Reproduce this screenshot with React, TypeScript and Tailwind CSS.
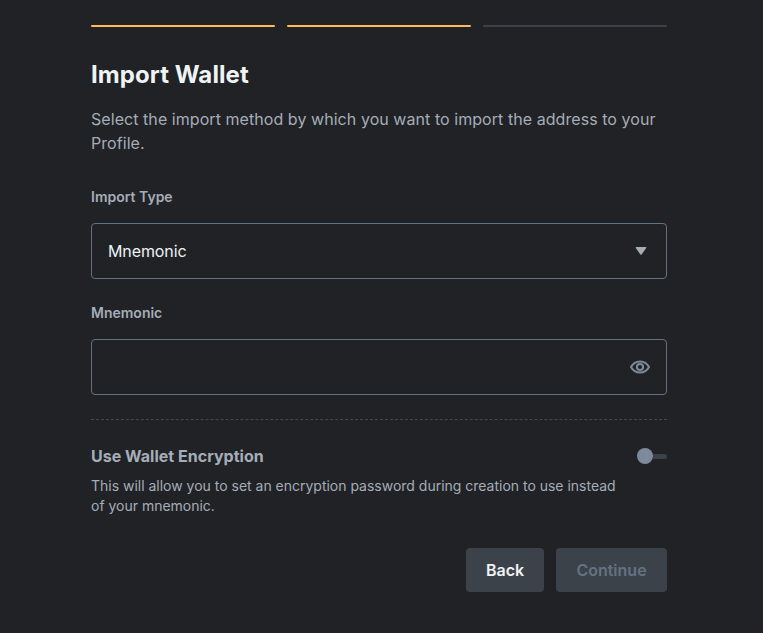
import React from "react";

export default function App() {
  return (
    <div className="min-h-screen w-full bg-[#212225] pt-[25px] pl-[91px] font-['Inter',sans-serif] text-[#a5adb9]">
      <main className="w-[576px]">
        <div className="grid grid-cols-3 gap-3">
          <div className="h-0.5 rounded-[1px] bg-[#ffbb56]" />
          <div className="h-0.5 rounded-[1px] bg-[#ffbb56]" />
          <div className="h-0.5 rounded-[1px] bg-[#3c4249]" />
        </div>
        <h1 className="mt-8 text-2xl leading-[31px] font-bold tracking-[0.08px] text-[#eef3f5]">Import Wallet</h1>
        <p className="mt-[17px] text-base leading-6 tracking-[0.058px]">
          Select the import method by which you want to import the address to your Profile.
        </p>
        <label className="mt-8 block text-sm leading-5 font-semibold">Import Type</label>
        <div className="mt-4 flex h-14 items-center justify-between rounded border border-[#637282] pr-[19px] pl-4 text-base tracking-[-0.1px] text-[#eef3f5]">
          Mnemonic
          <svg className="h-2 w-3 text-[#a5adb9]" viewBox="0 0 12 8">
            <path fill="currentColor" d="M1.300 0h9.400c.6 0 .9.600.5 1.100L6.800 7.300a1 1 0 0 1-1.600 0L.8 1.100C.4.600.7 0 1.300 0Z" />
          </svg>
        </div>
        <label className="mt-6 block text-sm leading-5 font-semibold">Mnemonic</label>
        <div className="mt-4 flex h-14 items-center justify-end rounded border border-[#637282] pr-4">
          <svg className="h-5 w-5 text-[#7e8a9c]" viewBox="0 0 20 20" fill="none" stroke="currentColor" strokeWidth="2">
            <path d="M1 10c2-3.700 5-5.600 9-5.600s7 1.900 9 5.600c-2 3.700-5 5.600-9 5.600s-7-1.900-9-5.600Z" />
            <circle cx="10" cy="10" r="3.100" />
          </svg>
        </div>
        <div className="mt-6 border-t border-dashed border-[#42484f]" />
        <div className="mt-6 flex h-6 items-center justify-between">
          <span className="text-base font-bold tracking-[0.02px]">Use Wallet Encryption</span>
          <span className="flex items-center">
            <span className="h-4 w-4 rounded-full bg-[#7e8a9c]" />
            <span className="h-[5px] w-3.5 rounded-r-full bg-[#3c4249]" />
          </span>
        </div>
        <p className="mt-2 w-[532px] text-sm leading-5 tracking-[-0.01px]">
          This will allow you to set an encryption password during creation to use instead of your mnemonic.
        </p>
        <div className="mt-8 flex justify-end gap-3 text-base font-semibold">
          <button className="h-11 w-[78px] rounded bg-[#3c4249] text-[#eef3f5]">Back</button>
          <button className="h-11 w-[111px] rounded bg-[#3c4249] text-[#637282]">Continue</button>
        </div>
      </main>
    </div>
  );
}
